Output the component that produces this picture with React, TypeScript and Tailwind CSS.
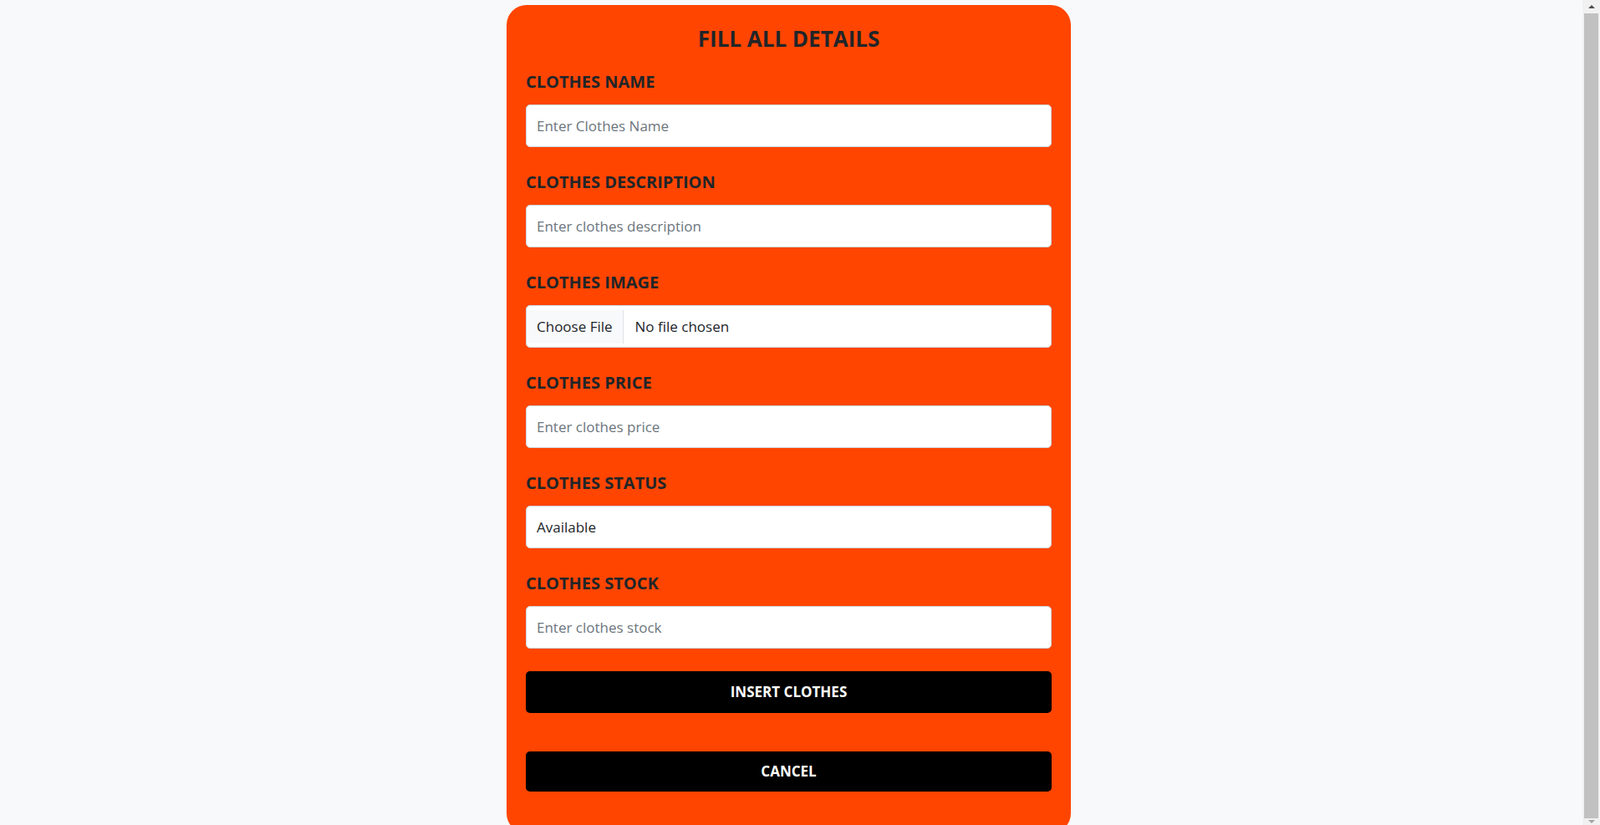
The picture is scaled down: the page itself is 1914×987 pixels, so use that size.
import React, { useState } from "react";

const fields = [
  { name: "clothes_name", label: "CLOTHES NAME", placeholder: "Enter Clothes Name" },
  { name: "clothes_description", label: "CLOTHES DESCRIPTION", placeholder: "Enter clothes description" },
  { name: "clothes_image", label: "CLOTHES IMAGE", type: "file" },
  { name: "clothes_price", label: "CLOTHES PRICE", placeholder: "Enter clothes price" },
  { name: "clothes_status", label: "CLOTHES STATUS", type: "status" },
  { name: "clothes_stock", label: "CLOTHES STOCK", placeholder: "Enter clothes stock" },
];

const inputClass =
  "w-full h-[51px] px-3 bg-white border border-[#ced4da] rounded-[5px] text-[17px] text-[#212529] placeholder:text-[#6c757d] outline-none";

// window scrollbar, as seen in the screenshot
const FakeScrollbar = () => (
  <div className="fixed right-0 top-0 h-screen w-[21px] bg-[#f1f1f1] flex flex-col items-center">
    <div className="h-[16px] flex items-center justify-center">
      <div className="w-0 h-0 border-l-[4px] border-r-[4px] border-b-[4px] border-l-transparent border-r-transparent border-b-[#505050]" />
    </div>
    <div className="flex-1 w-[17px] bg-[#c1c1c1]" />
    <div className="h-[8px] flex items-center justify-center">
      <div className="w-0 h-0 border-l-[4px] border-r-[4px] border-t-[4px] border-l-transparent border-r-transparent border-t-[#a3a3a3]" />
    </div>
  </div>
);

const App: React.FC = () => {
  const [fileName, setFileName] = useState("");

  return (
    <div className="min-h-screen bg-[#f8f9fa] flex justify-center pt-[6px] pb-[6px] pr-[27px] font-['Open_Sans',sans-serif]">
      <form
        className="w-[675px] bg-[#ff4500] rounded-[24px] px-[23px] pt-[24px] pb-[50px]"
        onSubmit={(e) => e.preventDefault()}
      >
        <h3 className="text-center font-bold text-[26px] leading-[32px] text-[#212529] mb-[24px]">
          FILL ALL DETAILS
        </h3>

        {fields.map((f) => (
          <div key={f.name} className="mb-[30px]">
            <label
              htmlFor={f.name}
              className="block font-bold text-[20px] leading-[24px] text-[#212529] mb-[15px]"
            >
              {f.label}
            </label>
            {f.type === "file" ? (
              <label
                htmlFor={f.name}
                className="flex items-center w-full h-[51px] bg-white border border-[#ced4da] rounded-[5px] text-[17px] text-[#212529] cursor-pointer"
              >
                <span className="flex items-center h-[40px] px-3 bg-[#f8f9fa] border-r border-[#dee2e6]">
                  Choose File
                </span>
                <span className="ml-[14px]">{fileName || "No file chosen"}</span>
                <input
                  id={f.name}
                  type="file"
                  className="hidden"
                  onChange={(e) => setFileName(e.target.files?.[0]?.name ?? "")}
                />
              </label>
            ) : f.type === "status" ? (
              <input id={f.name} className={inputClass} defaultValue="Available" readOnly />
            ) : (
              <input id={f.name} className={inputClass} placeholder={f.placeholder} />
            )}
          </div>
        ))}

        <button
          type="submit"
          className="block w-full h-[50px] -mt-[3px] bg-black text-white font-bold text-[17px] rounded-[5px]"
        >
          INSERT CLOTHES
        </button>
        <button
          type="button"
          className="block w-full h-[48px] mt-[46px] bg-black text-white font-bold text-[17px] rounded-[5px]"
        >
          CANCEL
        </button>
      </form>
      <FakeScrollbar />
    </div>
  );
};

export default App;
